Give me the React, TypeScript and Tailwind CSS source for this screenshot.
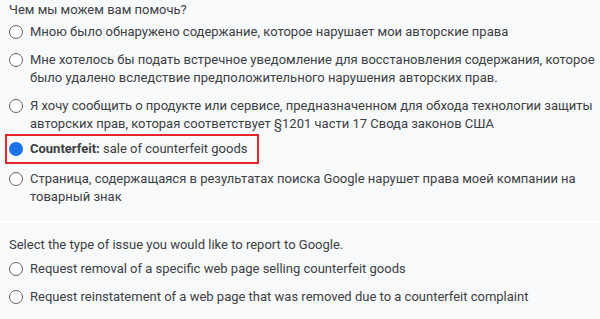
import React from "react";

function Radio({ checked }: { checked?: boolean }) {
  return checked ? (
    <span className="mt-[2px] block h-[14px] w-[14px] shrink-0 rounded-full bg-[#1a73e8]" />
  ) : (
    <span className="mt-[2px] block h-[14px] w-[14px] shrink-0 rounded-full border-[1.5px] border-[#5f6368] bg-white" />
  );
}

function Option({ children, checked, className = "" }: { children: React.ReactNode; checked?: boolean; className?: string }) {
  return (
    <div className={`flex items-start gap-[7px] ${className}`}>
      <Radio checked={checked} />
      <div className="leading-[18px]">{children}</div>
    </div>
  );
}

export default function App() {
  return (
    <div
      className="h-[319px] w-[600px] overflow-hidden bg-[#f8f9fa] text-[13px] text-[#3c4043]"
      style={{ fontFamily: "Roboto, 'Noto Sans', sans-serif" }}
    >
      <div className="flex flex-col pl-[9px] pr-[4px] pt-[1px]">
        <div className="leading-[18px]">Чем мы можем вам помочь?</div>
        <Option className="mt-[4px]">Мною было обнаружено содержание, которое нарушает мои авторские права</Option>
        <Option className="mt-[10px]">
          Мне хотелось бы подать встречное уведомление для восстановления содержания, которое
          было удалено вследствие предположительного нарушения авторских прав.
        </Option>
        <Option className="mt-[10px]">
          Я хочу сообщить о продукте или сервисе, предназначенном для обхода технологии защиты
          авторских прав, которая соответствует §1201 части 17 Свода законов США
        </Option>
        <div className="mt-[1px] -ml-[4px] w-[254px] border-2 border-[#e3262b] py-[4px] pl-[2px]">
          <Option checked>
            <span className="font-bold">Counterfeit:</span> sale of counterfeit goods
          </Option>
        </div>
        <Option className="mt-[6px]">
          Страница, содержащаяся в результатах поиска Google нарушет права моей компании на
          товарный знак
        </Option>
      </div>
      <div className="mt-[15px] h-[2px] bg-white" />
      <div className="flex flex-col pl-[9px] pr-[4px] pt-[13px]">
        <div className="leading-[18px]">Select the type of issue you would like to report to Google.</div>
        <Option className="mt-[6px]">Request removal of a specific web page selling counterfeit goods</Option>
        <Option className="mt-[10px]">Request reinstatement of a web page that was removed due to a counterfeit complaint</Option>
      </div>
    </div>
  );
}
